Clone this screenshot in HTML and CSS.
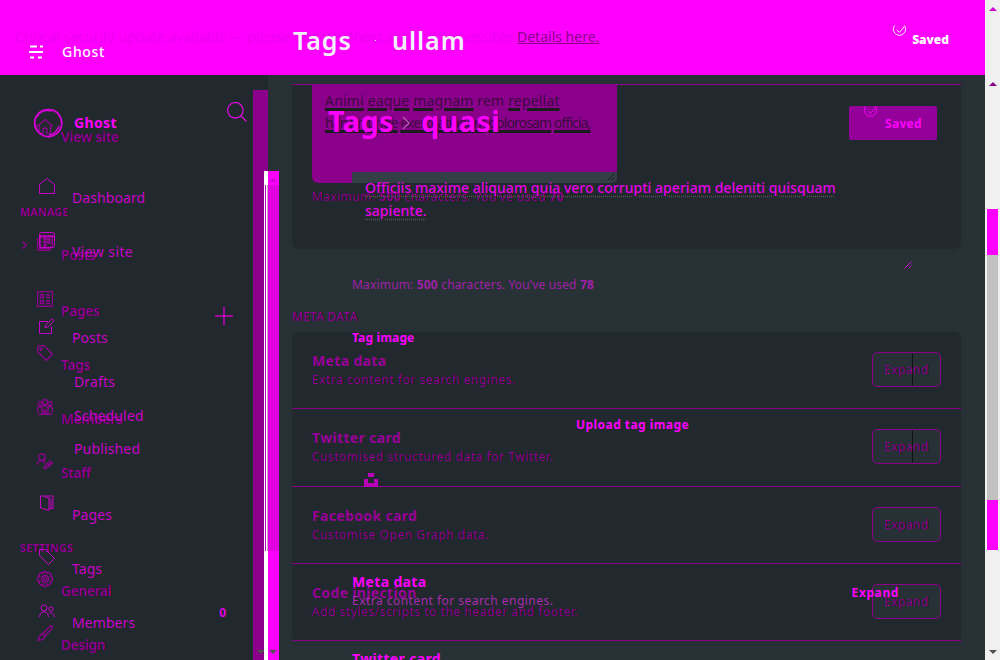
FILE: index.html
```html
<!DOCTYPE html>
<html lang="en">
<head>
<meta charset="utf-8">
<title>Tags - Ghost</title>
<link rel="stylesheet" href="styles.css">
</head>
<body>
<svg class="defs" width="0" height="0">
  <symbol id="home" viewBox="0 0 16 16"><path d="M0 8.500 8 1.500l8 7M2.500 7v8.500H6V11q2-2 4 0v4.500h3.500V7"/></symbol>
  <symbol id="house" viewBox="0 0 16 16"><path d="M.5 6.500 8 .5l7.500 6v9H.5z"/></symbol>
  <symbol id="browser" viewBox="0 0 16 16"><rect x=".5" y=".5" width="15" height="15" rx="2"/><path d="M1 4h14M1 5h14M6 5v10M8 8h5M8 11h5"/></symbol>
  <symbol id="stack" viewBox="0 0 16 16"><path d="M3.500.5h12v12h-12zM.5 3v12.500h13M2.500 3v10.500h12M6 4h7M6 7h7M6 10h4"/></symbol>
  <symbol id="list" viewBox="0 0 16 16"><rect x=".5" y=".5" width="15" height="15" rx="1"/><path d="M3.500 3.500h3v3h-3zM3.500 9.500h3v3h-3zM9 4h4M9 6.500h4M9 10h4M9 12.500h4"/></symbol>
  <symbol id="edit" viewBox="0 0 16 16"><path d="M9 3.500H.5v12h12V8M6 9.500l.7-2.500L13 .8l2 2L9 9z"/></symbol>
  <symbol id="tag" viewBox="0 0 16 16"><path d="M.5 2 2 .5h5l8.500 8.500-6 6.500L.5 6.500z"/><circle cx="4" cy="4" r="1.200"/></symbol>
  <symbol id="label" viewBox="0 0 16 16"><path d="M.5.5h6l9 9-6 6-9-9z"/></symbol>
  <symbol id="group" viewBox="0 0 16 16"><circle cx="8" cy="3" r="2.500"/><circle cx="3" cy="4.500" r="2"/><circle cx="13" cy="4.500" r="2"/><path d="M.5 14V9.500Q3 5 5 9.500V15h6V9.500Q13 5 15.500 9.500V14M5 9q3-5 6 0M7 15v-4h2v4M1 15.500h14"/></symbol>
  <symbol id="staff" viewBox="0 0 16 16"><circle cx="5" cy="4" r="3.200"/><path d="M.5 12V10Q2 7 5 7.500q2 0 3 3M8 13l5-5 2.500 2-5.500 5-3 .5zM10 14l4-4"/></symbol>
  <symbol id="pages" viewBox="0 0 16 16"><path d="M10 13.500h4V1H1.500v12L10 15.500V3L5 1.500M10 3.500l2 1v9"/></symbol>
  <symbol id="gear" viewBox="0 0 16 16"><path d="M6.500.5h3l.5 2 2-1 2.200 2.200-1 2 2.300.7v3l-2.300.7 1 2-2.200 2.200-2-1-.5 2.200h-3l-.5-2.200-2 1-2.200-2.200 1-2-2.300-.7v-3l2.300-.7-1-2L4 1.500l2 1z"/><circle cx="8" cy="8" r="3.500"/><circle cx="8" cy="8" r="1.700"/></symbol>
  <symbol id="people" viewBox="0 0 16 16"><circle cx="5" cy="5" r="3"/><circle cx="12" cy="6" r="2.200"/><path d="M.5 14Q1 9 5 9t4.500 5M10.500 10q4-1 5 4"/></symbol>
  <symbol id="brush" viewBox="0 0 16 16"><path d="M5.500 9 13 1q3-1 2.500 2L8 11M5.500 9 8 11.500Q6 16 .5 15q2-1 2-3.500 1-2.500 3-2.500"/></symbol>
  <symbol id="check" viewBox="0 0 16 16"><path d="M3 3.500a6.500 6.500 0 1 0 10 0M5 8.500l3 2.500 5-6"/></symbol>
  <symbol id="grip" viewBox="0 0 8 8"><path d="M.5 7.500l7-7M4.500 7.500l3-3"/></symbol>
  <symbol id="chevron" viewBox="0 0 5 8"><path d="m.5.5 4 3.500-4 3.500"/></symbol>
</svg>
<div class="window">
<div class="app">
  <div class="backdrop">
    <div class="banner"></div>
    <div class="grounds"><div class="side-ground"></div></div>
  </div>

  <div class="notice"><span class="notice-text">Critical security update available — please update Ghost as soon as possible.</span><a class="notice-link">Details here.</a></div>

  <div class="layer">
    <div class="nav past">
      <div class="item view"><svg><use href="#home"/></svg><span>View site</span></div>
      <div class="section manage">MANAGE</div>
      <div class="item posts"><svg class="chevron"><use href="#chevron"/></svg><svg><use href="#stack"/></svg><span>Posts</span></div>
      <div class="item"><svg><use href="#list"/></svg><span>Pages</span></div>
      <div class="item"><svg><use href="#tag"/></svg><span>Tags</span></div>
      <div class="item"><svg><use href="#group"/></svg><span>Members</span></div>
      <div class="item"><svg><use href="#staff"/></svg><span>Staff</span></div>
      <div class="section settings">SETTINGS</div>
      <div class="item"><svg><use href="#gear"/></svg><span>General</span></div>
      <div class="item"><svg><use href="#brush"/></svg><span>Design</span></div>
    </div>
    <div class="rail"><i class="down"></i></div>
    <div class="content">
      <div class="panel editor">
        <div class="textarea"><p><u>Animi</u> <u>eaque</u> <u>magnam</u> rem <u>repellat</u></p><p class="second"><u>harum</u> <u>unde</u> <u>exercitationem</u> <u>dolorosam</u> <u>officia,</u></p><div class="strip"><svg class="grip"><use href="#grip"/></svg></div></div>
        <p class="max">Maximum: <b>500</b> characters. You’ve used <b>70</b></p>
      </div>
      <div class="heading">META DATA</div>
      <div class="panel cards">
        <div class="card"><div><h4>Meta data</h4><p>Extra content for search engines.</p></div><button class="split">Expand</button></div>
        <div class="card"><div><h4>Twitter card</h4><p>Customised structured data for Twitter.</p></div><button class="split">Expand</button></div>
        <div class="card"><div><h4>Facebook card</h4><p>Customise Open Graph data.</p></div><button>Expand</button></div>
        <div class="card"><div><h4>Code injection</h4><p>Add styles/scripts to the header and footer.</p></div><button>Expand</button></div>
      </div>
    </div>
  </div>

  <div class="layer">
    <div class="nav now">
      <div class="top"><svg class="menu" viewBox="0 0 14 14"><path d="M1 1.500h7M11 1.500h3M0 7h14M1 12.500h4M9 12.500h4"/></svg><span>Ghost</span></div>
      <div class="brand"><svg class="logo" viewBox="0 0 32 32"><circle cx="16" cy="16" r="13.500"/><path d="M3 20Q1 7 13 3q14-3 17 12 0 12-13 15Q5 29 3 16M5 10Q9 2 20 4M27 19q-3 8-10 9"/></svg><b>Ghost</b><svg class="search" viewBox="0 0 18 18"><circle cx="7.500" cy="7.500" r="7"/><path d="m12.500 12.500 5 5"/></svg></div>
      <div class="item"><svg><use href="#house"/></svg><span>Dashboard</span></div>
      <div class="item"><svg><use href="#browser"/></svg><span class="wide">View site</span></div>
      <div class="item write"><svg><use href="#edit"/></svg><span>Posts</span><svg class="plus" viewBox="0 0 18 18"><path d="M9 0v18M0 9h18"/></svg></div>
      <div class="sub">Drafts</div><div class="sub">Scheduled</div><div class="sub">Published</div>
      <div class="item pages"><svg><use href="#pages"/></svg><span>Pages</span></div>
      <div class="item"><svg><use href="#label"/></svg><span>Tags</span></div>
      <div class="item"><svg><use href="#people"/></svg><span>Members</span><b class="count">0</b></div>
    </div>
    <div class="rail-now"><div class="edge"></div><div class="track"><i class="up"></i><i class="down"></i></div></div>
    <div class="front">
      <div class="title"><span class="crumb">Tags</span><i class="dot"></i><span>ullam</span><div class="saved"><svg><use href="#check"/></svg><b>Saved</b></div></div>
      <div class="title2"><div class="name"><span>Tags</span><svg viewBox="0 0 8 14"><path d="m1 1 6 6-6 6"/></svg><span class="quasi">quasi</span></div><div class="saved-button"><svg><use href="#check"/></svg><b>Saved</b></div></div>
      <p class="description">Officiis maxime aliquam quia vero corrupti aperiam deleniti quisquam<br>sapiente.</p>
      <svg class="grip handle"><use href="#grip"/></svg>
      <p class="max2">Maximum: <b>500</b> characters. You’ve used <b>78</b></p>
      <b class="image-label">Tag image</b>
      <b class="upload">Upload tag image</b>
      <svg class="unsplash" viewBox="0 0 14 14"><path d="M4 0h6v4H4zM0 6h4v4h6V6h4v8H0z"/></svg>
      <div class="meta"><div><h4>Meta data</h4><p>Extra content for search engines.</p></div><b>Expand</b></div>
      <h4 class="twitter">Twitter card</h4>
    </div>
  </div>
</div>
<div class="scrollbar"><i class="up first"></i><i class="up second"></i><div class="thumb"></div><i class="down"></i></div>
</div>
</body>
</html>
```
FILE: styles.css
```css
* { box-sizing: border-box; }
body { margin: 0; overflow: hidden; font-family: "Noto Sans", sans-serif; font-size: 14px; }
p, h4 { margin: 0; }
svg { fill: none; stroke: currentColor; flex: none; }
.defs { display: none; }
.window { display: flex; width: 1000px; height: 660px; overflow: hidden; }
.app { display: grid; width: 985px; height: 660px; overflow: hidden; background: #283236; }
.backdrop, .layer, .notice { grid-area: 1 / 1; min-width: 0; }
.banner { height: 75px; background: #f0f; }
.side-ground { width: 268px; height: 585px; background: #22292e; }
.layer { display: flex; height: 660px; overflow: hidden; }
.notice { padding: 26px 0 0 15px; height: 60px; line-height: 22px; white-space: nowrap; color: #f000f0; }
.notice-text { display: inline-block; width: 502px; letter-spacing: -.03px; }
.notice-link { color: #8b008b; text-decoration: underline; letter-spacing: 0; }

.nav { width: 253px; flex: none; overflow: hidden; }
.item { display: flex; align-items: center; height: 54px; }
.item > svg { width: 16px; height: 16px; margin-bottom: 23px; }
.past { color: #900090; text-shadow: 1px 0 #15171a; font-size: 14px; font-weight: 600; }
.past svg { stroke-width: 1.3; }
.past .item { padding-left: 37px; gap: 8px; letter-spacing: -.45px; }
.past .item > svg { margin-bottom: 22px; }
.past .view { margin-top: 109px; }
.past .view > svg { margin-bottom: 21px; }
.past .view span { letter-spacing: -.3px; }
.section { padding-left: 20px; height: 20px; line-height: 20px; font-size: 11px; font-weight: 700; }
.manage { margin-top: 39px; }
.past .posts { margin: 5px 0 2px; padding-left: 22px; }
.past .posts .chevron { width: 5px; height: 8px; margin-right: 2px; margin-bottom: 19px; }
.settings { margin: 39px 0 5px; letter-spacing: .1px; }
.now { color: #c800c8; font-size: 14px; }
.top { display: flex; align-items: center; gap: 19px; height: 75px; padding: 29px 0 0 29px; color: #fff; letter-spacing: .7px; font-weight: 500; line-height: 18px; }
.menu { width: 14px; height: 14px; stroke-width: 2; }
.brand { display: flex; align-items: center; height: 95px; padding-left: 32px; color: #f0f; }
.brand b { width: 163px; padding-left: 10px; letter-spacing: .35px; }
.logo { width: 32px; height: 32px; stroke-width: 1.5; color: #d000d0; }
.search { width: 20px; height: 20px; margin: 0 0 22px; }
.now .item { padding-left: 39px; gap: 17px; letter-spacing: .08px; }
.now .item .wide { letter-spacing: .4px; }
.now .write { margin-top: 32px; }
.plus.plus { width: 18px; height: 18px; margin-left: 90px; margin-bottom: 42px; stroke-width: 1.4; }
.sub { height: 34px; line-height: 35px; padding-left: 74px; letter-spacing: .15px; }
.sub:nth-last-child(4) { height: 33px; line-height: 33px; }
.now .pages { margin-top: 22px; }
.count { margin: 0 0 20px 67px; font-size: 12px; color: #e000e0; }
.rail { width: 15px; height: 570px; margin-top: 90px; padding: 560px 0 0 4px; flex: none; background: #8b008b; }
.up, .down { display: block; width: 0; height: 0; border: 4px solid transparent; }
.up { border-top: 0; border-bottom-color: #d000d0; }
.down { border-bottom: 0; border-top-color: #505050; }
.rail-now { display: flex; width: 26px; height: 489px; margin-top: 171px; padding-left: 11px; flex: none; }
.edge { width: 4px; background: linear-gradient(#fff 0 14px, transparent 14px 380px, #fff 380px), linear-gradient(90deg, #fff 0 1px, #c000c0 1px 2px, #fff 2px 3px, #c9a0c9 3px); }
.track { width: 11px; padding: 7px 0 0 1px; background: linear-gradient(#f0f 0 14px, #e000e0 14px 380px, #f0f 380px); }
.track .down { margin-top: 468px; }

.content { width: 693px; padding: 84px 0 0 24px; color: #900090; flex: none; }
.panel { width: 669px; background: #22292e; border-radius: 6px; box-shadow: 0 1px 4px #22292e80; }
.editor { height: 165px; padding-left: 20px; border-top: 1px solid #8b008b; border-radius: 0 0 8px 8px; }
.textarea { width: 305px; height: 98px; padding: 5px 0 0 13px; background: #8b008b; color: #3b0b40; border-radius: 0 0 6px 6px; line-height: 22px; font-size: 14px; letter-spacing: .18px; white-space: nowrap; }
.textarea u { text-decoration: underline 3px #1b1b1e; text-underline-offset: 2px; }
.textarea .second { letter-spacing: -.9px; }
.strip { display: flex; justify-content: flex-end; height: 11px; margin: 38px 0 0 27px; background: #343f45; border-radius: 0 0 5px 0; }
.grip { width: 8px; height: 8px; color: #17191c; margin: 1px 2px; }
.max { padding-top: 5px; font-size: 12px; line-height: 18px; letter-spacing: .43px; white-space: nowrap; text-shadow: 1px 0 #15171a; }
.heading { height: 83px; padding-top: 59px; line-height: 18px; font-size: 12px; font-weight: 500; letter-spacing: .2px; text-shadow: 1px 0 #15171a; }
.cards { height: 309px; }
.card { display: flex; justify-content: space-between; height: 77.33px; padding: 20px 20px 0; border-bottom: 1px solid #8b008b; text-shadow: 1px 0 #15171a; }
h4 { font-size: 14px; line-height: 18px; letter-spacing: .35px; }
.card h4 { color: #980098; text-shadow: none; }
.card p { font-size: 12px; line-height: 20px; letter-spacing: .55px; }
button { width: 69px; height: 35px; padding: 0; border: 1px solid #8b008b; border-radius: 5px; background: #273135; color: #900090; font: 12px "Noto Sans", sans-serif; letter-spacing: .4px; text-shadow: 1px 0 #15171a; }
.split { background: linear-gradient(#111, #111) 39px 0 / 1px 100% no-repeat #273135; }

.front { width: 706px; height: 660px; overflow: hidden; color: #f0f; flex: none; padding-left: 14px; }
.title { display: flex; align-items: center; height: 75px; padding-top: 5px; color: #f2f0fa; font-size: 25px; font-weight: 600; letter-spacing: 1px; }
.crumb { width: 82px; }
.dot { width: 1px; height: 1px; margin-right: 16px; background: #fff; }
.saved { display: flex; margin-left: auto; padding-right: 36px; gap: 5px; font-size: 12px; line-height: 20px; letter-spacing: 0; color: #fff; }
.saved svg { width: 15px; height: 15px; margin-top: -8px; }
.title2 { display: flex; justify-content: space-between; align-items: center; height: 96px; padding: 0 48px 0 35px; }
.name { display: flex; align-items: center; padding-bottom: 5px; font-size: 29px; line-height: 36px; font-weight: 700; letter-spacing: .3px; text-shadow: 1px 0 #45094b; }
.name svg { width: 8px; height: 14px; margin: 4px 11px 0 8px; stroke-width: 1.5; color: #b050b0; }
.saved-button { display: flex; width: 88px; height: 34px; padding-left: 14px; gap: 7px; background: #93009a; border-radius: 2px; font-size: 12px; line-height: 35px; letter-spacing: .3px; overflow: hidden; }
.saved-button svg { width: 15px; height: 15px; margin-top: -3px; }
.description { height: 90px; padding: 5px 0 0 72px; color: #e800e8; line-height: 23px; font-size: 14px; font-weight: 500; letter-spacing: .03px; white-space: nowrap; text-decoration: underline dotted #555; text-underline-offset: 3px; }
.handle { display: block; color: #d000d0; margin: 0 0 0 611px; }
.max2 { margin: 7px 0 0 59px; line-height: 18px; font-size: 12px; letter-spacing: .17px; color: #a020a8; }
.image-label { display: block; margin: 35px 0 0 59px; line-height: 18px; font-size: 12px; letter-spacing: .15px; }
.upload { display: block; margin: 69px 0 0 283px; line-height: 18px; font-size: 12px; letter-spacing: .45px; }
.unsplash { display: block; width: 14px; height: 14px; margin: 39px 0 0 71px; fill: #b800b8; stroke: none; }
.meta { display: flex; justify-content: space-between; margin-top: 86px; padding: 0 86px 0 59px; }
.meta p { line-height: 20px; font-size: 12px; letter-spacing: .47px; color: #a82ab0; }
.meta > b { line-height: 40px; font-size: 12px; letter-spacing: .6px; }
.twitter { margin: 37px 0 0 59px; }

.scrollbar { width: 15px; height: 660px; padding: 7px 2px 0; background: #f0f0f0; }
.scrollbar i { margin: 0 auto; }
.scrollbar .second { margin-top: 71px; border-bottom-color: #8b008b; }
.thumb { height: 341px; margin: 123px 0 100px; background: linear-gradient(#f0f 0 46px, #c1c1c1 46px 291px, #f0f 291px); }
```
